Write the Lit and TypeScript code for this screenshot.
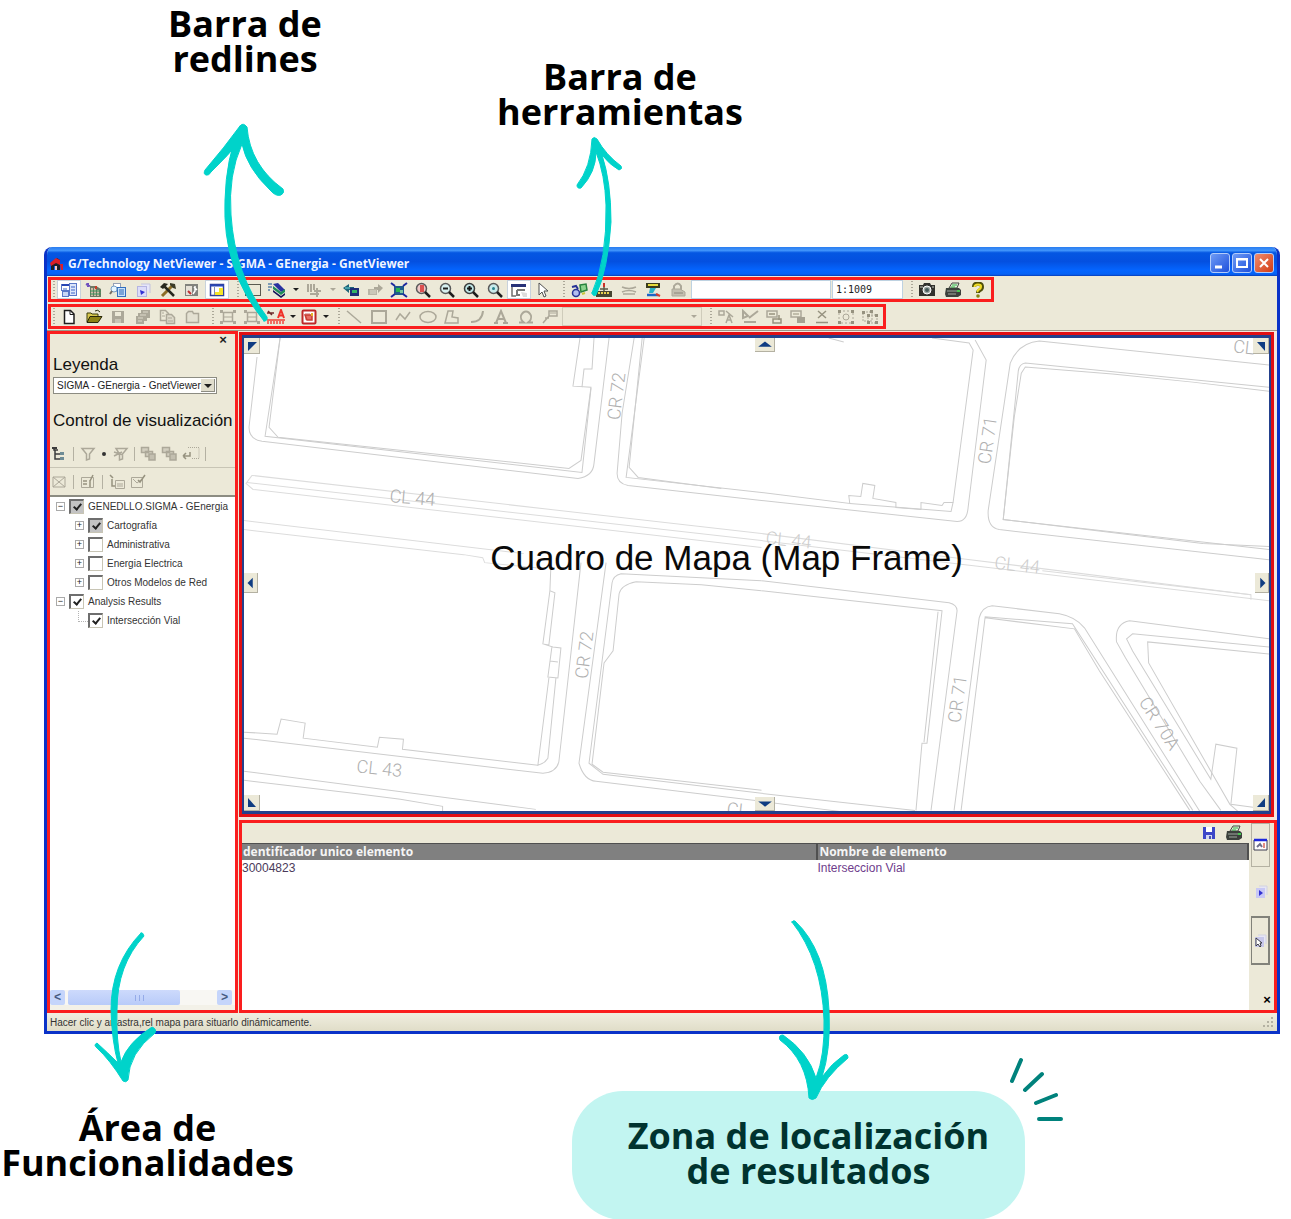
import { LitElement, html, css, svg, nothing, TemplateResult, SVGTemplateResult } from "lit";
import { customElement, property } from "lit/decorators.js";
import { classMap } from "lit/directives/class-map.js";

const G = "#aca899";

/* Glyphs are drawn in an 18 x 16 box. */
const glyphs: Record<string, SVGTemplateResult> = {
  details: svg`<rect x="1.5" y="2.5" width="8" height="6" fill="#fff" stroke="#5a78c8"/><path d="M2 3h8" stroke="#2846b4" stroke-width="2"/><rect x="9.500" y="1.500" width="7" height="12" fill="#dce6fa" stroke="#5a78c8"/><path d="M11 5h4M11 8h4M11 11h4M3 7h4" stroke="#3c64c8"/><rect x="2.500" y="9.500" width="6" height="5" fill="#c8d7f5" stroke="#5a78c8"/>`,
  building: svg`<path d="M1 2l4 2M3 1v4" stroke="#6e50be" stroke-width="2"/><path d="M5 4h6l5 3v8H5z" fill="#6e7864"/><path d="M7 6v8M10 6v8M13 8v6" stroke="#f0d2be" stroke-width="1.500"/><path d="M5 9h11M5 12h11" stroke="#32965a"/><path d="M11 4v3" stroke="#c83c28" stroke-width="2"/>`,
  find: svg`<rect x="4.500" y="1.500" width="7" height="8" fill="#fff" stroke="#96a0b4"/><rect x="8.500" y="5.500" width="8" height="9" fill="#c8e1fa" stroke="#326ebe"/><path d="M10 8h5M10 10h5M10 12h5" stroke="#2864b4"/><circle cx="5" cy="7" r="3" fill="#e6f5ff" stroke="#78a0c8"/><path d="M3 9l-2 3" stroke="#786e64" stroke-width="2"/>`,
  help: svg`<path d="M7 2h9v9" fill="#e6e6fa" stroke="#c3c3dc"/><rect x="3.500" y="4.500" width="9" height="10" fill="#dcdcfa" stroke="#b4b4e1"/><path d="M6 8l5 2-4 3z" fill="#3232d2"/>`,
  tools: svg`<path d="M3 14L13 4" stroke="#8c6e28" stroke-width="3"/><path d="M15 14L5 4" stroke="#28281e" stroke-width="2.500"/><path d="M1 5l4-4 4 1-5 5z" fill="#28281e"/><path d="M11 1l5 1 1 5-3-1-3-3z" fill="#3c3c28"/>`,
  exit: svg`<rect x="2" y="2" width="13" height="12" fill="#82827d"/><rect x="3" y="4" width="6" height="9" fill="#e6e1d7"/><path d="M12 4v5l-2 3M11 5l3 3" stroke="#fff" fill="none" stroke-width="1.500"/><path d="M5 9l3 3" stroke="#be3232" stroke-width="2"/>`,
  windowPane: svg`<rect x="2.500" y="2.500" width="13" height="11" fill="#fff" stroke="#32419b" stroke-width="1.500"/><path d="M2 3.500h14" stroke="#2846b4" stroke-width="2"/><path d="M7 10h8v3H7z M11 6h4v7h-4z" fill="#f5e628"/><path d="M6.500 5v8" stroke="#828cb4"/>`,
  rect: svg`<rect x="1.500" y="2.500" width="15" height="11" fill="none" stroke="#5a5a50"/>`,
  layers: svg`<path d="M1 1v8M3 1v6" stroke="#5a82aa" stroke-width="1.500" stroke-dasharray="2 1"/><path d="M5 2l5-1 7 7-4 2z" fill="#2832a0"/><path d="M5 4l8 6 4-3v3l-4 3-8-6z" fill="#1e8c5a"/><path d="M5 8l8 6 4-3v2l-4 3-8-6z" fill="#14145a"/>`,
  gList: svg`<path d="M3 2v8M6 2v8M9 2v6" stroke="${G}" stroke-width="2"/><path d="M5 12h9M9 9h7M12 6v9" stroke="${G}" stroke-width="2"/>`,
  back: svg`<path d="M1 6l6-4v3h5v3H7v3z" fill="#1e6478"/><rect x="8" y="6" width="9" height="8" fill="#1e2d78"/><path d="M10 8h5v3h-5z" fill="#32b464"/><path d="M3 6h5" stroke="#6edcdc"/>`,
  forward: svg`<path d="M17 6l-5-4v3H8v3h4v3z" fill="${G}"/><rect x="2" y="7" width="9" height="6" fill="#b9b5a6"/><path d="M4 9h6M4 11h6" stroke="#dcd9cb"/>`,
  fit: svg`<rect x="4" y="4" width="10" height="9" fill="#1e5a8c"/><path d="M6 6h4v4H6z" fill="#28b450"/><path d="M10 8h3v3h-3z" fill="#78c8a0"/><path d="M1 1l4 3M17 1l-4 3M1 15l4-3M17 15l-4-3" stroke="#1e28a0" stroke-width="2"/>`,
  zoomArea: svg`<circle cx="7.500" cy="6.500" r="5" fill="#f0c8c8" stroke="#5a5a5a" stroke-width="1.500"/><path d="M6 3h4v7H6z" fill="#dc5050"/><path d="M11 10l5 5" stroke="#1e1e1e" stroke-width="2.500"/>`,
  zoomOut: svg`<circle cx="7.500" cy="6.500" r="5" fill="#d7f0f0" stroke="#5a5a5a" stroke-width="1.500"/><path d="M5 6.500h5" stroke="#1e1e1e" stroke-width="2"/><path d="M11 10l5 5" stroke="#1e1e1e" stroke-width="2.500"/>`,
  zoomIn: svg`<circle cx="7.500" cy="6.500" r="5" fill="#bee6e6" stroke="#3c3c3c" stroke-width="1.500"/><path d="M5 6.500h5M7.500 4v5" stroke="#141414" stroke-width="2"/><path d="M11 10l5 5" stroke="#1e1e1e" stroke-width="2.500"/>`,
  zoomPrev: svg`<circle cx="7.500" cy="6.500" r="5" fill="#c8ebeb" stroke="#5a5a5a" stroke-width="1.500"/><circle cx="7.500" cy="6.500" r="1.500" fill="#28828c"/><path d="M11 10l5 5" stroke="#1e1e1e" stroke-width="2.500"/>`,
  pan: svg`<rect x="1" y="2" width="15" height="3" fill="#283278"/><path d="M2 5v9h4" stroke="#6e6e6e" fill="none" stroke-width="1.500"/><path d="M7 8h8M7 8v5h3" stroke="#787878" stroke-width="2" fill="none"/><path d="M11 10l6 1v4h-4z" fill="#dcdcdc"/>`,
  pointer: svg`<path d="M5 1v12l3-3 2 5 2-1-2-5h4z" fill="#fff" stroke="#505050"/>`,
  trace: svg`<path d="M10 3l6-1 1 6-6 2z" fill="#8cd28c" stroke="#28823c" stroke-width="1.500"/><circle cx="6" cy="11" r="3.500" fill="#b4bef0" stroke="#283296" stroke-width="1.500"/><path d="M2 5l4-1 2 3" stroke="#283296" stroke-width="2" fill="none"/><path d="M12 12l3-1" stroke="#c8c83c" stroke-width="2"/>`,
  measure: svg`<path d="M9 1v4" stroke="#c83228" stroke-width="2"/><path d="M5 7h8M9 5v4" stroke="#5a5a46" stroke-width="1.500"/><rect x="1" y="9" width="16" height="6" fill="#464632"/><path d="M3 11h12" stroke="#e6d250" stroke-width="2" stroke-dasharray="2 1"/>`,
  gWave: svg`<path d="M2 5q7 3 14 0M2 10q7-3 14 0M3 12h12" stroke="${G}" stroke-width="1.500" fill="none"/>`,
  screen: svg`<path d="M2 1h14v5H2z" fill="#3c3c1e"/><path d="M4 3h10" stroke="#e6dc3c" stroke-width="2"/><path d="M6 6h6l-3 5H5z" fill="#28b4c8"/><path d="M3 13h11" stroke="#1e64c8" stroke-width="2.500"/><path d="M12 12l4 2" stroke="#d23c32" stroke-width="2"/>`,
  gBag: svg`<path d="M5 8V4q4-5 7 0v4" stroke="${G}" stroke-width="2" fill="none"/><path d="M3 7h8l5 3v4H3z" fill="#c3bfb0" stroke="${G}"/><path d="M5 11h9" stroke="#8c887a"/>`,
  camera: svg`<path d="M1 3h4l1-2h6l1 2h4v11H1z" fill="#32322d"/><circle cx="9" cy="8" r="4" fill="#a0aaa5" stroke="#fff"/><circle cx="9" cy="8" r="2" fill="#465a5a"/><path d="M2 5h3M14 5h2" stroke="#c8c8be"/>`,
  printer: svg`<path d="M5 6l3-5h7l-2 5z" fill="#e1f0dc" stroke="#464641"/><path d="M2 6h13l2 2v5l-3 2H2L1 12z" fill="#3c413c"/><path d="M8 3h5M7 5h4" stroke="#32b446"/><path d="M3 9h10M4 12h8" stroke="#a0aaa0"/><path d="M13 9h3" stroke="#46c850" stroke-width="2"/>`,
  question: svg`<path d="M5 5q0-3.500 4-3.500T13 5q0 2-2 3t-2 3" stroke="#50500a" stroke-width="4" fill="none"/><path d="M5.500 5q0-2.500 3.500-2.500T12 5q0 1.500-2 2.500T9 10" stroke="#f0dc28" stroke-width="2" fill="none"/><circle cx="9" cy="14" r="1.800" fill="#828214"/>`,
  blank: svg`<path d="M4.500 1.500h6l3.500 3.500v9.500H4.500z" fill="#fff" stroke="#1e1e1e" stroke-width="1.500"/><path d="M10 2v3.500h4" fill="none" stroke="#1e1e1e"/>`,
  open: svg`<path d="M2 13V4h4l1 1h6v3" fill="#d7c850" stroke="#3c3c0a"/><path d="M2 13.500l3-6h12l-4 6z" fill="#8c8214" stroke="#28280a"/><path d="M10 2q3-2 5 1" stroke="#28280a" fill="none"/>`,
  gSave: svg`<path d="M3 2h12v12H3z" fill="${G}"/><path d="M6 3h6v4H6z" fill="#ece9d8"/><path d="M6 10h6v4H6z" fill="#c8c4b5"/>`,
  gSaveAll: svg`<path d="M7 1h9v8h-3v3h-3v3H2V7h2V4h3z" fill="${G}"/><path d="M4 9h5M6 6h6M9 3h5M4 12h4" stroke="#dedacb"/>`,
  gCopy: svg`<path d="M2.500 1.500h5l3 3v7h-8z" fill="none" stroke="${G}" stroke-width="1.500"/><path d="M8.500 5.500h5l3 3v6h-8z" fill="#dedacb" stroke="${G}" stroke-width="1.500"/><path d="M10 9h4M10 12h5M4 4h2M4 7h3" stroke="${G}"/>`,
  gFolder: svg`<path d="M3.500 13.500V4.500l2-2h4l1 2h5v9z" fill="#e4e1d2" stroke="${G}" stroke-width="1.500"/>`,
  gFrame: svg`<rect x="4.500" y="3.500" width="9" height="9" fill="none" stroke="${G}" stroke-width="1.500"/><path d="M1 1h3v3H1zM14 1h3v3h-3zM1 12h3v3H1zM14 12h3v3h-3z" fill="${G}"/><path d="M4 8h10" stroke="${G}"/>`,
  redText: svg`<path d="M0 4h7M1 2l4 4" stroke="#6e2828" stroke-width="1.500"/><path d="M11 9l3-8 3 8M12 6.500h4" stroke="#f03228" stroke-width="2" fill="none"/><path d="M0 11h18" stroke="#f03c32" stroke-width="1.500"/><path d="M0 13.500h18" stroke="#f06e64" stroke-width="3" stroke-dasharray="2 1"/>`,
  redBox: svg`<rect x="2.500" y="1.500" width="13" height="13" rx="1" fill="#fff" stroke="#be2828" stroke-width="2"/><rect x="5" y="4" width="5" height="7" fill="#e6b4b4"/><path d="M5 6h7v5H7z" fill="#e66e64" stroke="#c83c32" stroke-width="1.500"/><path d="M11 4h2v3h-2z" fill="#e6b428"/>`,
  gLine: svg`<path d="M2 2l14 12" stroke="${G}" stroke-width="1.500"/>`,
  gSquare: svg`<rect x="2" y="2" width="14" height="12" fill="none" stroke="${G}" stroke-width="2"/>`,
  gPoly: svg`<path d="M2 11l4-6 5 5 5-7" fill="none" stroke="${G}" stroke-width="1.500"/>`,
  gEllipse: svg`<ellipse cx="9" cy="8" rx="8" ry="5.500" fill="none" stroke="${G}" stroke-width="1.500"/>`,
  gShape: svg`<path d="M5 2h5L9 8l6 1v5H2z" fill="none" stroke="${G}" stroke-width="1.500"/>`,
  gArc: svg`<path d="M15 2q-1 11-12 11" fill="none" stroke="${G}" stroke-width="2"/>`,
  gLetterA: svg`<path d="M4 14L9 2l5 12M6 10h6M2 14h4M11 14h5" fill="none" stroke="${G}" stroke-width="2"/>`,
  gOmega: svg`<path d="M2 13.500h5q-4-3-3-7 2-4 5-4t5 4q1 4-3 7h5" fill="none" stroke="${G}" stroke-width="1.800"/>`,
  gFlag: svg`<path d="M8 2h8v5H8zM8 7l-6 7M4 9h4" fill="none" stroke="${G}" stroke-width="1.500"/><path d="M9 4h6" stroke="${G}"/>`,
  gEdit1: svg`<path d="M2 2h5v4H2zM9 2l7 6M9 14l3-8 3 8M10 11h4" fill="none" stroke="${G}" stroke-width="1.500"/>`,
  gEdit2: svg`<path d="M2 2v7l5-2zM8 9l9-7M3 13h12" fill="none" stroke="${G}" stroke-width="2"/>`,
  gEdit3: svg`<path d="M2 2h10v6H2z" fill="none" stroke="${G}" stroke-width="1.500"/><path d="M4 5h6M8 10h8v4H8zM14 6v5" fill="none" stroke="#96927f" stroke-width="1.500"/>`,
  gEdit4: svg`<path d="M2 2h10v6H2z" fill="none" stroke="${G}" stroke-width="1.500"/><path d="M4 5h6" stroke="#96927f"/><path d="M8 8h8v6H8z" fill="#a5a192"/>`,
  gDelete: svg`<path d="M5 2l8 7M13 2L5 9" fill="none" stroke="#96927f" stroke-width="1.500"/><path d="M3 13.500h12" stroke="#96927f" stroke-width="1.500"/>`,
  gGroup: svg`<path d="M2 2h14v12H2z" fill="none" stroke="${G}" stroke-dasharray="2 2"/><path d="M1 1h3v3H1zM14 1h3v3h-3zM1 12h3v3H1zM14 12h3v3h-3z" fill="#96927f"/><circle cx="9" cy="8" r="3" fill="none" stroke="${G}"/>`,
  gUngroup: svg`<path d="M2 3h9v9H2zM7 6h9v8H7z" fill="none" stroke="${G}" stroke-dasharray="2 1"/><path d="M1 2h3v3H1zM9 1h3v3H9zM14 5h3v3h-3zM6 12h3v3H6zM14 12h3v3h-3zM6 5h3v3H6z" fill="#96927f"/>`,
  treeIcon: svg`<path d="M4 1v3h4M5 4v9h5M5 8h5" fill="none" stroke="#3c3c3c" stroke-width="1.500"/><path d="M10 6h4v3h-4zM10 11h4v3h-4z" fill="#6e8c96"/><path d="M2 2h5" stroke="#3c3c3c" stroke-width="2"/>`,
  gFilter: svg`<path d="M3 2.500h12l-4.500 5.500v5l-3 1V8z" fill="none" stroke="${G}" stroke-width="1.500"/>`,
  gFilterX: svg`<path d="M5 2.500h11l-4.500 5.500v5l-3 1V8zM3 6l9 3M3 10l8-4" fill="none" stroke="${G}" stroke-width="1.500"/>`,
  gStack: svg`<path d="M1.500 1.500h7v5h-7zM5.500 5.500h7v5h-7z" fill="#d2cebf" stroke="${G}" stroke-width="1.500"/><path d="M9 8h6v6H9z" fill="#c3bfb0" stroke="${G}" stroke-width="1.500"/>`,
  gReturn: svg`<path d="M6 1.500h11v11H9" fill="none" stroke="${G}" stroke-dasharray="1 1"/><path d="M1 10h7V6M1 10l3-3M1 10l3 3" fill="none" stroke="#96927f" stroke-width="1.500"/>`,
  gMail: svg`<path d="M3 3h12v10H3zM3 3l12 10M15 3L3 13" fill="none" stroke="${G}"/>`,
  gProps: svg`<path d="M2.500 3.500h12v10h-12z" fill="none" stroke="${G}"/><path d="M4 7h4M4 10h4M11 6v7M14 1l-3 6" stroke="#96927f" stroke-width="1.500"/>`,
  gAdd: svg`<path d="M7.500 6.500h9v8h-9zM9 10h6M9 12h6" fill="none" stroke="${G}"/><path d="M2 1l3 3M4 5v7h3" fill="none" stroke="#96927f" stroke-width="1.500"/>`,
  gCheckDoc: svg`<path d="M2.500 3.500h11v10h-11zM4 5l4 4 4-3" fill="none" stroke="${G}"/><path d="M9 6l2 2 5-7" fill="none" stroke="#96927f" stroke-width="1.500"/>`,
  save: svg`<path d="M3 2h12v12H3z" fill="#3c46c8"/><path d="M6 2h6v5H6z" fill="#fff"/><path d="M6 10h6v4H6z" fill="#d2d7f5"/><path d="M10 11v3" stroke="#1e2896" stroke-width="1.500"/>`,
  tabPicture: svg`<path d="M2 3h13v10H2z" fill="#fff" stroke="#3c3c50"/><path d="M2 3h13" stroke="#1e28dc" stroke-width="2.500"/><path d="M5 10l3-3 2 3" stroke="#6e6e8c" stroke-width="2" fill="none"/><path d="M12 6v5" stroke="#e68c82" stroke-width="2"/>`,
  tabPage: svg`<path d="M7 2h8v9" fill="#e6e6f5" stroke="#d2d2e1"/><rect x="4" y="4" width="9" height="10" fill="#c8c8f5"/><path d="M7 6l4 3-4 3z" fill="#3232d2"/>`,
  tabSelect: svg`<path d="M7 2h8v9" fill="#e6e6f5" stroke="#d2d2e1"/><rect x="4" y="4" width="9" height="10" fill="#c8c8eb"/><path d="M5 5v8l2-2 2 3 1-1-1-3h2z" fill="#fff" stroke="#3c3c46"/>`,
};

const icon = (name: string): TemplateResult =>
  html`<svg class="glyph" viewBox="0 0 18 16" aria-hidden="true">${glyphs[name]}</svg>`;

interface Tool {
  icon: string;
  label: string;
  on?: boolean;
  off?: boolean;
  menu?: boolean;
}

const t = (icon: string, label: string, extra: Partial<Tool> = {}): Tool => ({ icon, label, ...extra });
const off = { off: true };

const panels = [
  t("details", "Detalles", { on: true }), t("building", "Catastro"), t("find", "Localizar"), t("help", "Consulta"),
  t("tools", "Opciones"), t("exit", "Salir"), t("windowPane", "Paneles", { on: true }),
];
const navigation = [
  t("rect", "Marco"), t("layers", "Capas", { menu: true }), t("gList", "Escalas", { off: true, menu: true }),
  t("back", "Vista anterior"), t("forward", "Vista siguiente", off), t("fit", "Ajustar"), t("zoomArea", "Zoom de área"),
  t("zoomOut", "Alejar"), t("zoomIn", "Acercar"), t("zoomPrev", "Zoom previo"), t("pan", "Desplazar", { on: true }),
  t("pointer", "Seleccionar"),
];
const analysis = [
  t("trace", "Traza"), t("measure", "Medir"), t("gWave", "Comparar", off), t("screen", "Pantalla"), t("gBag", "Guardar selección", off),
];
const output = [t("camera", "Capturar"), t("printer", "Imprimir"), t("question", "Ayuda")];

const files = [
  t("blank", "Nuevo"), t("open", "Abrir"), t("gSave", "Guardar", off), t("gSaveAll", "Guardar todo", off),
  t("gCopy", "Copiar", off), t("gFolder", "Cerrar", off),
];
const redlines = [
  t("gFrame", "Marco de redline", off), t("gFrame", "Ajustar redline", off),
  t("redText", "Estilo de texto", { menu: true }), t("redBox", "Color de redline", { menu: true }),
];
const drawing = [
  t("gLine", "Línea", off), t("gSquare", "Rectángulo", off), t("gPoly", "Polilínea", off), t("gEllipse", "Elipse", off),
  t("gShape", "Polígono", off), t("gArc", "Arco", off), t("gLetterA", "Texto", off), t("gOmega", "Símbolo", off), t("gFlag", "Etiqueta", off),
];
const editing = [
  t("gEdit1", "Editar texto", off), t("gEdit2", "Editar geometría", off), t("gEdit3", "Traer al frente", off),
  t("gEdit4", "Enviar atrás", off), t("gDelete", "Eliminar", off), t("gGroup", "Agrupar", off), t("gUngroup", "Desagrupar", off),
];

const glyphCss = css`
  .glyph { display: block; width: 18px; height: 16px; flex: none; }
  button { font: inherit; color: inherit; margin: 0; padding: 0; border: 0; background: none; border-radius: 0; }
`;

@customElement("tool-group")
class ToolGroup extends LitElement {
  @property({ attribute: false }) tools: Tool[] = [];
  @property({ type: Boolean }) tight = false;

  static styles = [glyphCss, css`
    :host { display: flex; justify-content: space-between; align-items: stretch; flex: none; }
    .tool { width: 24px; height: 100%; display: flex; align-items: center; justify-content: center; }
    .on { background: #fff; box-shadow: inset 0 0 0 1px #c8d2dc; }
    .menu { width: 13px; display: flex; align-items: center; justify-content: center; }
    .tight { width: 9px; }
    .menu::after { content: ""; border: 3px solid transparent; border-top-color: #1e1e1e; border-bottom: 0; }
    .menu:disabled::after { border-top-color: #aca899; }
  `];

  render() {
    return this.tools.map((tool) => html`
      <button class=${classMap({ tool: true, on: !!tool.on })} aria-label=${tool.label} ?disabled=${!!tool.off}>${icon(tool.icon)}</button>
      ${tool.menu ? html`<button class=${classMap({ menu: true, tight: this.tight })} aria-label=${`Menú de ${tool.label}`} ?disabled=${!!tool.off}></button>` : nothing}
    `);
  }
}

interface Node { label: string; level: number; expander?: "+" | "-"; checked?: boolean; mixed?: boolean; }

const tree: Node[] = [
  { label: "GENEDLLO.SIGMA - GEnergia", level: 0, expander: "-", checked: true, mixed: true },
  { label: "Cartografía", level: 1, expander: "+", checked: true, mixed: true },
  { label: "Administrativa", level: 1, expander: "+" },
  { label: "Energia Electrica", level: 1, expander: "+" },
  { label: "Otros Modelos de Red", level: 1, expander: "+" },
  { label: "Analysis Results", level: 0, expander: "-", checked: true },
  { label: "Intersección Vial", level: 1, checked: true },
];

@customElement("legend-panel")
class LegendPanel extends LitElement {
  static styles = [glyphCss, css`
    :host { display: flex; flex-direction: column; background: #ece9d8; color: #222; font: 10px/14px "Liberation Sans", Arial, sans-serif; min-width: 0; overflow: hidden; }
    .top { display: flex; justify-content: flex-end; padding: 0 7px 9px; }
    .close { width: 10px; height: 12px; font: bold 13px/12px "Liberation Sans", sans-serif; }
    h2 { margin: 0; padding: 0 3px; font-weight: 400; font-size: 17px; line-height: 20px; color: #111; white-space: nowrap; }
    .pick { position: relative; width: 164px; margin: 2px 0 17px 3px; display: flex; }
    select { appearance: none; width: 100%; height: 17px; margin: 0; border: 1px solid #8c8c82; border-radius: 0; background: #fff; padding: 0 3px; font: inherit; color: #222; }
    .pick::before { content: ""; position: absolute; right: 2px; top: 2px; width: 14px; height: 13px; background: #e0ddcc; box-shadow: inset -1px -1px #8c8c82; pointer-events: none; }
    .pick::after { content: ""; position: absolute; right: 5px; top: 7px; border: 4px solid transparent; border-top-color: #1e1e1e; border-bottom: 0; pointer-events: none; }
    .bar { display: flex; align-items: center; height: 27px; }
    .first { margin-top: 9px; border-bottom: 1px solid #c8c5b5; }
    .bar button { width: 18px; display: flex; justify-content: center; }
    .bar i { width: 1px; height: 14px; background: #b4b1a2; margin: 0 5px; }
    .bar .gap { margin-right: 3px; }
    .bar .drop { width: 14px; }
    .drop::after { content: ""; border: 2px solid #333; border-radius: 2px; }
    .tree { flex: 1; margin: 0; padding: 0; list-style: none; background: #fff; border-top: 2px solid #8c8c82; overflow: hidden; }
    .node { display: flex; align-items: center; height: 19px; padding-left: 5px; gap: 4px; white-space: nowrap; }
    .child { padding-left: 24px; }
    .leaf { padding-left: 28px; gap: 0; }
    .twig { width: 9px; height: 9px; border: 1px solid #aaa; box-sizing: border-box; font-size: 9px; line-height: 7px; text-align: center; flex: none; margin-left: 1px; }
    .stub { width: 9px; height: 10px; border: 1px dotted #b4b4b4; border-width: 0 0 1px 1px; align-self: flex-start; flex: none; }
    label { display: flex; align-items: center; gap: 4px; color: #333; }
    input { appearance: none; position: relative; width: 15px; height: 15px; margin: 0; box-sizing: border-box; background: #fff; border: 1px solid #c8c5b5; border-top: 2px solid #6e6e6e; border-left: 2px solid #6e6e6e; flex: none; }
    .mixed { background: #c3c3c3; }
    input:checked::after { content: ""; position: absolute; left: 4px; top: 1px; width: 3px; height: 6px; border: solid #222; border-width: 0 2px 2px 0; transform: rotate(40deg); }
    .scroll { display: flex; height: 15px; background: #f8f7f3; border-bottom: 5px solid #f3f1e8; flex: none; padding-right: 3px; }
    .scroll button { width: 15px; background: #c5d5fb; color: #465a82; font: bold 12px/14px "Liberation Mono", monospace; border-radius: 2px; }
    .track { flex: 1; padding: 0 37px 0 3px; }
    .thumb { height: 15px; background: linear-gradient(#cddafc, #b8cbf9); border-radius: 2px; display: flex; align-items: center; justify-content: center; gap: 3px; padding-left: 30px; }
    .thumb i { width: 1px; height: 6px; background: #95abe8; }
  `];

  render() {
    return html`
      <div class="top"><button class="close" aria-label="Cerrar">×</button></div>
      <h2>Leyenda</h2>
      <div class="pick"><select aria-label="Leyenda"><option>SIGMA - GEnergia - GnetViewer</option></select></div>
      <h2>Control de visualización</h2>
      <div class="bar first">
        <button aria-label="Árbol">${icon("treeIcon")}</button><i></i>
        <button aria-label="Filtro">${icon("gFilter")}</button><button class="drop" aria-label="Menú de filtro"></button>
        <button aria-label="Quitar filtro">${icon("gFilterX")}</button><i></i>
        <button class="gap" aria-label="Subir">${icon("gStack")}</button><button class="gap" aria-label="Bajar">${icon("gStack")}</button>
        <button aria-label="Restaurar">${icon("gReturn")}</button><i></i>
      </div>
      <div class="bar">
        <button aria-label="Mensaje">${icon("gMail")}</button><i></i>
        <button aria-label="Propiedades">${icon("gProps")}</button><i></i>
        <button class="gap" aria-label="Agregar">${icon("gAdd")}</button><button aria-label="Validar">${icon("gCheckDoc")}</button>
      </div>
      <ul class="tree">
        ${tree.map((n) => html`
          <li class=${classMap({ node: true, child: n.level === 1, leaf: !n.expander })}>
            ${n.expander ? html`<button class="twig" aria-label=${`Expandir ${n.label}`}>${n.expander === "+" ? "+" : "−"}</button>` : html`<span class="stub"></span>`}
            <label><input type="checkbox" class=${classMap({ mixed: !!n.mixed })} .checked=${!!n.checked} />${n.label}</label>
          </li>`)}
      </ul>
      <div class="scroll">
        <button aria-label="Izquierda">&lt;</button>
        <div class="track"><div class="thumb"><i></i><i></i><i></i></div></div>
        <button aria-label="Derecha">&gt;</button>
      </div>
    `;
  }
}

const parcels = [
  "M257 357L249 427Q249 439 262 441L577 478Q592 476 593 463L608 338",
  "M280 338L269 427L278 437L568 468L580 460L590 387L572 386L579 338",
  "M280 338L265 436L581 472L590 388",
  "M593 338L591 369L583 369L581 387",
  "M633 338L621 413L616 473Q616 483 627 485L760 500L955 521Q965 521 966 507L984 360L973 340",
  "M643 338L625 477L760 492L848 503L847 495L859 496L861 483L873 485L871 498L894 502L894 507L919 509L919 502L940 505L942 502L951 502L971 350L967 343L930 338",
  "M848 503L949 511L951 502M641 338L628 467L637 477L720 488M827 338L842 342",
  "M1266 365L1037 341Q1016 343 1008 363L986 510Q985 527 997 529L1266 559",
  "M1266 387L1023 363Q1017 364 1016 371L1001 519L1266 549",
  "M1266 391L1190 382L1110 374L1023 367L1019 373L1012 417L1001 519L1200 543L1266 546",
  "M550 565L549 590L554 592L548 644L542 643L549 590M552 646L560 647L557 677L547 676L551 646M549 660L557 661M542 643L552 646",
  "M555 677L547 757Q544 762 537 764L548 677",
  "M244 731L277 733L281 718L305 722L303 737L377 746L379 736L403 738L402 748L537 764",
  "M244 737L542 772Q556 771 558 760L580 562",
  "M244 770L535 808M244 779L353 792L400 798L442 805L442 810",
  "M605 562L578 762Q583 779 595 780L760 800L838 810",
  "M760 580L620 573Q612 575 611 582L588 762L602 773L760 792L913 809",
  "M760 580L947 602Q955 604 955 610L929 809",
  "M760 590L700 584L635 581Q620 584 618 593L612 650L603 662L591 763L602 771L760 789",
  "M760 590L940 610L925 742L920 742L914 809M936 611L922 741",
  "M952 809L977 617Q980 606 990 605L1057 613Q1073 616 1082 627L1197 810",
  "M959 809L983 616L1070 623L1190 809M983 617L1072 628L1097 670L1187 809",
  "M1266 638L1127 620Q1112 623 1114 641L1123 657L1197 780L1218 809",
  "M1266 646L1130 633L1124 638L1130 650L1208 778L1213 743L1234 747L1228 803L1250 806",
  "M1266 653L1145 641L1146 662L1227 803L1235 810",
];
const avenues = [
  "M252 475L760 533L960 558L1248 594", "M247 482L760 540L1266 600", "M252 475L246 483L253 489L760 547",
  "M244 520L523 553", "M244 529L463 554L482 557L484 562L545 568", "M1040 570L1248 594L1248 599",
];
const streets = [
  { x: 615, y: 396, r: -83, name: "CR 72" }, { x: 985, y: 440, r: -82, name: "CR 71" },
  { x: 412, y: 497, r: 5, name: "CL 44" }, { x: 787, y: 539, r: 6, name: "CL 44", faint: true },
  { x: 1015, y: 564, r: 6, name: "CL 44", faint: true }, { x: 379, y: 767, r: 6, name: "CL 43" },
  { x: 583, y: 654, r: -83, name: "CR 72" }, { x: 955, y: 698, r: -82, name: "CR 71" },
  { x: 1157, y: 722, r: 57, name: "CR 70A" }, { x: 1241, y: 347, r: 6, name: "CL" }, { x: 736, y: 808, r: 6, name: "CL" },
];
const arrows = [
  { at: "nw", d: "M4 4h9l-9 9z" }, { at: "n", d: "M8 4l6 6H2z" }, { at: "ne", d: "M12 4H4l8 9z" },
  { at: "w", d: "M4 8l6-6v12z" }, { at: "e", d: "M12 8L6 2v12z" },
  { at: "sw", d: "M4 12V3l8 9z" }, { at: "s", d: "M8 11L2 5h12z" }, { at: "se", d: "M12 12V3l-8 9z" },
];

@customElement("map-frame")
class MapFrame extends LitElement {
  static styles = [glyphCss, css`
    :host { display: block; position: relative; background: #fff; border: 3px solid #23408c; border-left-width: 2px; border-right-width: 2px; overflow: hidden; }
    .map { display: block; width: 100%; aspect-ratio: 1022 / 472; }
    .line { fill: none; stroke: #cdcdcd; stroke-width: 1; }
    .faint { stroke: #dcdcdc; }
    .street { font: 300 18px Roboto, sans-serif; fill: #b0b0b0; text-anchor: middle; dominant-baseline: central; }
    .pale { fill: #cdcdcd; }
    .caption { position: absolute; inset: 0; display: flex; align-items: center; justify-content: center; margin: 0; padding: 0 60px 34px 0; font: 400 35px/40px "Liberation Sans", Arial, sans-serif; color: #0a0a0a; }
    .nav { position: absolute; width: 16px; height: 16px; background: #ece9d8; box-shadow: inset -1px -1px #b4b1a2; }
    .nav svg { display: block; width: 16px; height: 16px; fill: #0f3c82; }
    .nw { left: 0; top: 0; } .ne { right: 0; top: 0; } .sw { left: 0; bottom: 0; } .se { right: 0; bottom: 0; }
    .n, .s { left: 50%; width: 20px; height: 14px; margin-left: -2px; }
    .n svg, .s svg { width: 20px; height: 14px; }
    .n { top: 0; } .s { bottom: 0; }
    .n path, .s path { transform-origin: 8px 8px; transform: scale(1.3, 1); }
    .w, .e { top: 50%; width: 14px; height: 20px; margin-top: -2px; }
    .w svg, .e svg { width: 14px; height: 20px; }
    .w { left: 0; } .e { right: 0; }
  `];

  render() {
    return html`
      <svg class="map" viewBox="244 338 1022 472" preserveAspectRatio="xMidYMid slice" role="img" aria-label="Mapa de calles">
        ${avenues.map((d) => svg`<path class="line faint" d=${d} />`)}
        ${parcels.map((d) => svg`<path class="line" d=${d} />`)}
        ${streets.map((s) => svg`<text class=${s.faint ? "street pale" : "street"} transform=${`translate(${s.x} ${s.y}) rotate(${s.r})`}>${s.name}</text>`)}
      </svg>
      <p class="caption">Cuadro de Mapa (Map Frame)</p>
      ${arrows.map((a) => html`<button class="nav ${a.at}" aria-label=${`Mover ${a.at}`}><svg viewBox="0 0 16 16"><path d=${a.d} /></svg></button>`)}
    `;
  }
}

@customElement("results-panel")
class ResultsPanel extends LitElement {
  static styles = [glyphCss, css`
    :host { display: flex; background: #fff; min-height: 187px; overflow: hidden; font: 12px/17px "Liberation Sans", Arial, sans-serif; }
    .main { flex: 1; min-width: 0; display: flex; flex-direction: column; }
    .bar { display: flex; justify-content: flex-end; align-items: center; gap: 7px; height: 20px; padding-right: 6px; background: #ece9d8; }
    table { width: 100%; border-collapse: collapse; table-layout: fixed; }
    .wide { width: 57%; }
    th { background: #808080; color: #f5f5f5; text-align: left; font: bold 12px/16px "Open Sans", sans-serif; padding: 0 0 0 1px; border-top: 1px solid #505050; border-right: 2px solid #505050; }
    td { padding: 0; color: #4a3a5a; }
    .vial { color: #6e3c8c; }
    .tabs { display: flex; flex-direction: column; width: 25px; background: #ece9d8; }
    .tab { height: 49px; margin: 0 4px 0 2px; border: 1px solid transparent; display: flex; align-items: center; justify-content: center; }
    .raised { border-color: #b4b1a2; height: 44px; }
    .pressed { border: 2px solid #82827a; border-left-width: 1px; }
    .close { margin: auto 1px 2px auto; width: 12px; font: bold 13px/16px "Liberation Sans", sans-serif; }
  `];

  render() {
    return html`
      <div class="main">
        <div class="bar"><button aria-label="Guardar resultados">${icon("save")}</button><button aria-label="Imprimir resultados">${icon("printer")}</button></div>
        <table>
          <thead><tr><th class="wide" scope="col">dentificador unico elemento</th><th scope="col">Nombre de elemento</th></tr></thead>
          <tbody><tr><td>30004823</td><td class="vial">Interseccion Vial</td></tr></tbody>
        </table>
      </div>
      <div class="tabs">
        <button class="tab raised" aria-label="Imagen">${icon("tabPicture")}</button>
        <button class="tab" aria-label="Consulta">${icon("tabPage")}</button>
        <button class="tab pressed" aria-label="Selección">${icon("tabSelect")}</button>
        <button class="close" aria-label="Cerrar">×</button>
      </div>
    `;
  }
}

@customElement("app-root")
class AppRoot extends LitElement {
  static styles = [glyphCss, css`
    :host { display: block; position: relative; background: #fff; font-family: "Liberation Sans", Arial, sans-serif; overflow: hidden; }
    .above { display: flex; align-items: flex-start; height: 247px; padding-left: 158px; }
    .note { margin: 0; font: 700 36px/35px "Open Sans", sans-serif; color: #000; text-align: center; white-space: nowrap; }
    .redlines { width: 174px; padding-top: 6px; }
    .herramientas { width: 262px; margin-left: 157px; padding-top: 59px; }
    .below { display: flex; align-items: flex-start; }
    .area { width: 295px; padding-top: 76px; display: flex; justify-content: center; }
    .pill { width: 453px; height: 129px; box-sizing: border-box; margin: 57px 0 0 277px; padding: 27px 0 0 20px; border-radius: 51px; background: #c2f5f1; }
    .zona { color: #00332f; }

    .window { margin: 0 11px 0 44px; border: 3px solid #0a32c8; border-top: 0; border-radius: 8px 8px 0 0; background: #ece9d8; overflow: hidden; }
    .title { display: flex; align-items: center; height: 29px; margin: 0 -3px; padding: 0 6px; gap: 4px; background: linear-gradient(#2a7df0, #3f93fb 12%, #0557e2 20%, #0450e0 50%, #0465ff 80%, #0562f5 94%, #0a3cb4); color: #f0f5ff; }
    .title h1 { flex: 1; margin: 0; font: bold 12px/20px "Open Sans", sans-serif; padding-top: 4px; white-space: nowrap; }
    .logo { width: 14px; height: 14px; margin-top: 4px; }
    .controls { display: flex; gap: 2px; padding-top: 3px; }
    .control { width: 20px; height: 20px; border: 1px solid #b4cdfa; border-radius: 3px; background: linear-gradient(135deg, #6e9bf5, #1e50dc); }
    .exit { background: linear-gradient(135deg, #f08c6e, #d23c14); }
    .control svg { display: block; width: 18px; height: 18px; fill: none; stroke: #fff; stroke-width: 2; }

    .bars { display: flex; flex-direction: column; align-items: flex-start; gap: 2px; padding: 1px 0 1px 1px; border-bottom: 1px solid #9b9888; }
    .bar { display: flex; align-items: stretch; height: 19px; border: 3px solid #fa1e1e; padding-right: 1px; background: #ece9d8; }
    .grip { width: 2px; margin: 1px 2px 1px 8px; background: repeating-linear-gradient(#aca899 0 1px, transparent 1px 3px); }
    .bar .grip:first-child { margin-left: 2px; }
    .w172 { width: 172px; } .w147 { width: 147px; } .w123 { width: 123px; } .w75 { width: 75px; } .w220 { width: 220px; } .w168 { width: 168px; }
    .field { box-sizing: border-box; height: 19px; margin: 0 0 0 1px; padding: 0 3px; border: 1px solid #bed2e1; border-radius: 0; background: #fff; font: 10px/16px "DejaVu Sans Mono", monospace; color: #1e1e1e; }
    .place { width: 140px; }
    .scale { width: 71px; }
    .combo { position: relative; display: flex; }
    .combo select { appearance: none; width: 140px; height: 19px; border: 1px solid #c3c0b0; border-radius: 0; background: #ece9d8; margin: 0; }
    .combo::after { content: ""; position: absolute; right: 5px; top: 8px; border: 3px solid transparent; border-top-color: #aca899; border-bottom: 0; }

    .body { display: grid; grid-template-columns: 191px minmax(0, 1fr); gap: 0 1px; background: #ece9d8; }
    .framed { border: 3px solid #fa1e1e; }
    .right { display: flex; flex-direction: column; gap: 3px; background: #f5e6dc; padding-top: 1px; }
    .mapbox { border-color: #e10f14; margin-right: 3px; }
    .status { height: 18px; padding: 0 3px; display: flex; justify-content: space-between; align-items: center; background: linear-gradient(#f0eee0, #e0ddc8); font-size: 10px; line-height: 17px; color: #333; }
    .resize { width: 12px; height: 12px; fill: #b4b1a2; }

    .overlay { position: absolute; left: 0; top: 0; width: 1291px; height: 1219px; pointer-events: none; fill: #00d3ca; stroke: #00d3ca; stroke-linecap: round; stroke-linejoin: round; stroke-width: 1; }
    .burst { stroke: #00827c; stroke-width: 4; }
  `];

  render() {
    return html`
      <header class="above">
        <p class="note redlines">Barra de<br />redlines</p>
        <p class="note herramientas">Barra de<br />herramientas</p>
      </header>

      <main class="window">
        <div class="title">
          <svg class="logo" viewBox="0 0 14 14" aria-hidden="true"><path d="M1 6l6-5 3 2v10H7V9H4v4H1z" fill="#1e1e28" /><path d="M0 6l6-5 4 2v5L6 6 1 9zM10 7h3v6h-2z" fill="#dc1e28" /><path d="M5 9h2v4H5z" fill="#f5c8c8" /></svg>
          <h1>G/Technology NetViewer - SIGMA - GEnergia - GnetViewer</h1>
          <div class="controls">
            <button class="control" aria-label="Minimizar"><svg viewBox="0 0 18 18"><path d="M4 13h7" stroke-width="3" /></svg></button>
            <button class="control" aria-label="Maximizar"><svg viewBox="0 0 18 18"><path d="M4 5h10v8H4zM4 5.500h10" /></svg></button>
            <button class="control exit" aria-label="Cerrar"><svg viewBox="0 0 18 18"><path d="M5 5l8 8M13 5l-8 8" /></svg></button>
          </div>
        </div>

        <div class="bars">
          <div class="bar">
            <span class="grip"></span><tool-group class="w172" .tools=${panels}></tool-group>
            <span class="grip"></span><tool-group .tools=${navigation}></tool-group>
            <span class="grip"></span><tool-group class="w123" .tools=${analysis}></tool-group>
            <input class="field place" type="text" aria-label="Buscar" />
            <input class="field scale" type="text" aria-label="Escala" value="1:1009" />
            <span class="grip"></span><tool-group class="w75" .tools=${output}></tool-group>
          </div>
          <div class="bar">
            <span class="grip"></span><tool-group class="w147" .tools=${files}></tool-group>
            <span class="grip"></span><tool-group tight .tools=${redlines}></tool-group>
            <span class="grip"></span><tool-group class="w220" .tools=${drawing}></tool-group>
            <span class="combo"><select aria-label="Estilo" disabled></select></span>
            <span class="grip"></span><tool-group class="w168" .tools=${editing}></tool-group>
          </div>
        </div>

        <div class="body">
          <legend-panel class="framed"></legend-panel>
          <div class="right">
            <div class="framed mapbox"><map-frame></map-frame></div>
            <results-panel class="framed"></results-panel>
          </div>
        </div>

        <footer class="status">
          <span>Hacer clic y arrastra,rel mapa para situarlo dinámicamente.</span>
          <svg class="resize" viewBox="0 0 12 12" aria-hidden="true"><path d="M9 1h2v2H9zM9 5h2v2H9zM5 5h2v2H5zM9 9h2v2H9zM5 9h2v2H5zM1 9h2v2H1z" /></svg>
        </footer>
      </main>

      <section class="below">
        <div class="area"><p class="note">Área de<br />Funcionalidades</p></div>
        <div class="pill"><p class="note zona">Zona de localización<br />de resultados</p></div>
      </section>

      <svg class="overlay" viewBox="0 0 1291 1219" aria-hidden="true">
        <path d="M264 321Q222 270 225 200Q226 158 240 126Q243 122 247 127Q250 165 283 189Q285 193 281 195Q276 197 270 190Q247 168 242 144Q228 175 231 215Q235 275 267 317Q268 321 264 321Z" />
        <path d="M240 126Q224 148 205 170Q203 174 206 175Q209 176 211 172Q227 157 243 137Z" />
        <path d="M592 293Q607 260 606 205Q605 175 596 152Q596 172 581 188Q577 189 577 185Q591 167 592 139Q594 136 597 139Q606 155 621 166Q623 169 619 170Q610 165 602 155Q611 182 611 222Q608 270 596 295Q593 297 592 293Z" />
        <path d="M141 933Q111 964 111 1010Q112 1042 118 1063Q108 1053 97 1043Q93 1045 97 1048Q110 1060 123 1081Q126 1083 128 1080Q129 1053 155 1033Q157 1029 152 1027Q128 1042 121 1062Q116 1040 117 1010Q117 965 144 936Q143 932 141 933Z" />
        <path d="M792 922Q822 960 824 1020Q825 1055 816 1078Q808 1052 783 1035Q778 1035 780 1040Q807 1060 809 1098Q812 1101 816 1098Q825 1077 848 1058Q848 1053 844 1055Q832 1063 822 1077Q831 1050 829 1010Q826 950 795 921Q793 920 792 922Z" />
        <path class="burst" d="M1021 1060L1012 1081M1042 1074L1025 1090M1056 1095L1036 1103M1039 1119H1061" />
      </svg>
    `;
  }
}
